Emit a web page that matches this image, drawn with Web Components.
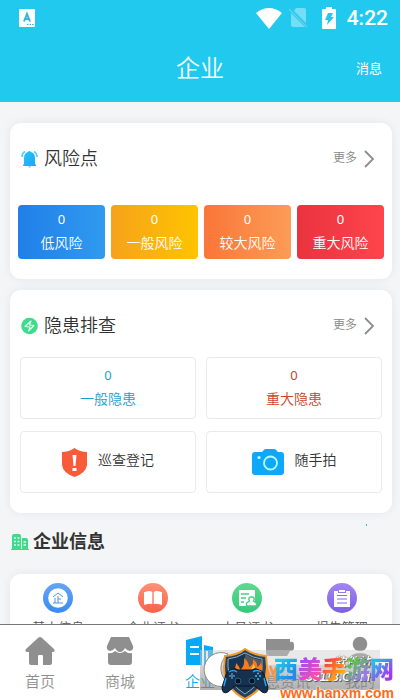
<!DOCTYPE html>
<html lang="zh-CN">
<head>
<meta charset="utf-8">
<meta name="viewport" content="width=device-width, initial-scale=1">
<title>企业</title>
<style>
  html, body { margin: 0; height: 100%; }
  body { font-family: Roboto, "Noto Sans CJK SC", sans-serif; font-weight: 350; color: #333; background: #f4f5f6; overflow: hidden; }
</style>
</head>
<body>
<enterprise-app></enterprise-app>

<script>
const define = (name, html) => {
  const t = document.createElement('template');
  t.innerHTML = `<style>*{box-sizing:border-box}button{font:inherit;color:inherit;background:none;border:0;padding:0;margin:0;cursor:pointer}svg{display:block;flex:none}</style>` + html;
  customElements.define(name, class extends HTMLElement {
    constructor() {
      super();
      this.attachShadow({ mode: 'open' }).append(t.content.cloneNode(true));
    }
  });
};

define('status-bar', `
<style>
  :host { display: flex; align-items: center; height: 36px; padding: 0 12px 0 19px; color: #fff; font: 500 21px/24px Roboto, sans-serif; }
  .right { display: flex; align-items: center; margin-left: auto; }
  .sim { margin-left: 7px; } .bat { margin-left: 14px; } time { margin-left: 11px; }
</style>
<svg width="16" height="18" viewBox="0 0 16 18"><rect width="16" height="18" rx="1" fill="#fff"/><path d="M5 12.500 8 5l3 7.500M6 10h4" fill="none" stroke="#35b5dd" stroke-width="2"/><path d="M8 15.500h7" stroke="#35b5dd" stroke-dasharray="1.500 1"/></svg>
<div class="right">
  <svg width="26" height="21" viewBox="0 0 26 21"><path d="M0 5Q13-5 26 5L13 21Z" fill="#fff"/></svg>
  <svg class="sim" width="19" height="20" viewBox="0 0 19 20"><path d="M7 0h8q2 0 2 2v13L5 3ZM2 5 16 19H4q-2 0-2-2Z" fill="#73def5"/><path d="m0 1 18 18" stroke="#68cde3" stroke-width="1.500"/></svg>
  <svg class="bat" width="14" height="22" viewBox="0 0 14 22"><path d="M4 0h6v2h3q1 0 1 1v18q0 1-1 1H1q-1 0-1-1V3q0-1 1-1h3Z" fill="#fff"/><path d="M6 6h5L9 10h3l-7 8 1-5H3Z" fill="#26c5ea"/></svg>
  <time>4:22</time>
</div>`);

define('page-header', `
<style>
  :host { display: block; background: #22c9ef; color: #fff; flex: none; }
  .bar { display: grid; grid-template-columns: 1fr auto 1fr; align-items: center; height: 66px; padding: 0 18px; }
  h1 { grid-column: 2; margin: 0; font-size: 24px; line-height: 36px; font-weight: 350; }
  button { justify-self: end; font-size: 13px; line-height: 20px; font-weight: 400; }
</style>
<status-bar></status-bar>
<div class="bar"><h1><slot name="title"></slot></h1><button type="button"><slot name="action"></slot></button></div>`);

define('content-card', `
<style>
  :host { display: block; background: #fff; border-radius: 11px; box-shadow: 0 0 8px rgba(200,214,226,.4); padding: 0 8px 20px; }
  header { display: flex; align-items: center; height: 72px; padding: 0 9px 0 3px; }
  h2 { margin: 0 auto 0 6px; font-size: 18px; line-height: 28px; font-weight: 350; }
  button { display: flex; align-items: center; gap: 7px; color: #888; font-size: 12px; line-height: 20px; }
  button span { padding-bottom: 2px; }
</style>
<header><slot name="icon"></slot><h2><slot name="title"></slot></h2>
<button type="button"><span>更多</span><svg width="11" height="18" viewBox="0 0 11 18"><path d="m1 1 8 8-8 8" fill="none" stroke="#8c8c8c" stroke-width="1.800"/></svg></button></header>
<slot></slot>`);

define('risk-tile', `
<style>
  :host { display: block; }
  button { display: grid; align-content: center; justify-items: center; width: 100%; height: 54px; padding-bottom: 2px; border-radius: 4px; color: #fff; background: linear-gradient(90deg, var(--from), var(--to)); font-size: 14px; line-height: 24px; }
  .n { font-family: "Noto Sans", sans-serif; font-size: 13px; font-weight: 400; }
</style>
<button type="button"><span class="n"><slot name="count"></slot></span><span><slot></slot></span></button>`);

define('count-box', `
<style>
  :host { display: block; }
  button { display: grid; align-content: center; justify-items: center; width: 100%; height: 62px; padding-bottom: 2px; border: 1px solid #e8eaed; border-radius: 4px; font-size: 14px; line-height: 24px; color: var(--tone); }
  .n { font-family: "Noto Sans", sans-serif; font-size: 13px; font-weight: 400; }
</style>
<button type="button"><span class="n"><slot name="count"></slot></span><span><slot></slot></span></button>`);

define('action-box', `
<style>
  :host { display: block; }
  button { display: flex; align-items: center; justify-content: center; gap: 11px; width: 100%; height: 62px; border: 1px solid #e8eaed; border-radius: 4px; font-size: 14px; line-height: 24px; }
  span { padding-bottom: 4px; }
</style>
<button type="button"><slot name="icon"></slot><span><slot></slot></span></button>`);

define('section-title', `
<style>
  :host { display: flex; align-items: center; gap: 4px; padding: 15px 25px 18px 1px; }
  h2 { margin: 0 auto 0 0; font-size: 18px; line-height: 28px; font-weight: 700; }
  .dot { align-self: flex-start; width: 1px; height: 2px; margin-top: -4px; background: #35b9c9; }
</style>
<slot name="icon"></slot><h2><slot></slot></h2><i class="dot"></i>`);

define('info-link', `
<style>
  :host { display: block; flex: 1; }
  button { display: grid; justify-items: center; gap: 5px; width: 100%; font-size: 13px; line-height: 20px; color: #555; white-space: nowrap; }
</style>
<button type="button"><slot name="icon"></slot><span><slot></slot></span></button>`);

define('tab-item', `
<style>
  :host { display: block; flex: 1 1 0; min-width: 0; color: #8f8f8f; }
  :host([active]) { color: #07a9f5; }
  a { display: grid; justify-items: center; gap: 5px; padding-top: 11px; color: inherit; text-decoration: none; font-size: 15px; line-height: 22px; white-space: nowrap; }
</style>
<a href="#"><slot name="icon"></slot><span><slot></slot></span></a>`);

define('site-watermark', `
<style>
  :host { display: block; position: absolute; right: 4px; bottom: 0; width: 196px; height: 52px; pointer-events: none; }
  .strip { position: absolute; left: 0; top: 2px; width: 180px; height: 40px; background: linear-gradient(rgba(205,205,205,.45) 0 36%, rgba(170,170,170,.5) 37%, rgba(125,125,125,.6)); }
  .under { position: absolute; right: 26px; top: 7px; display: grid; justify-items: end; color: #fff; font: italic 700 12px/15px "Liberation Sans", "Noto Sans CJK SC", sans-serif; text-shadow: 0 0 1px #222, 1px 1px 1px #555; }
  .art { position: absolute; left: 2px; top: 0; }
  .name { position: absolute; right: 2px; top: 4px; display: flex; font: 900 24px/32px "Noto Sans CJK SC", sans-serif; }
  .name span { background: linear-gradient(135deg, var(--a) 25%, var(--b) 75%); background-clip: text; -webkit-background-clip: text; color: transparent; }
  .url { position: absolute; right: 2px; bottom: -1px; color: #ff6b16; font: 700 14px/16px "Liberation Sans", sans-serif; text-shadow: 0 0 2px #fff, 0 0 2px #fff; }
</style>
<div class="strip"></div>
<div class="under"><span>软件站</span><span>C9113.COM</span></div>
<svg class="art" width="78" height="52" viewBox="0 0 78 52">
  <path d="M26 6A17 17 0 1 0 28 36 18 18 0 0 1 26 6Z" fill="#fff" stroke="#8b8b8b"/>
  <path d="M68 18l3 8 4-8M64 18l3 9-4 5M77 18l-5 15" fill="none" stroke="#f79349" stroke-width="2.500"/>
  <path d="M43 1Q51 7 64 8L65 19Q65 40 43 51 22 40 22 19L23 8Q36 7 43 1Z" fill="#25415f" stroke="#f29a2d" stroke-width="2"/>
  <path d="M43 5q8 5 17 6v8q-1 18-17 27Q27 37 26 19v-8q9-1 17-6Z" fill="#153451" stroke="#93a9b8"/>
  <path d="M43 6q8 5 16 6v9H43Z" fill="#57585e"/>
  <path d="M30 22q4-1 4-7 4 4 4 7 5-3 4-12 5 4 5 9 5-2 4-8 5 4 4 8 3-1 4-5 3 8 0 14l-8 6H38l-8-6Z" fill="#ff7917"/><path d="M46 24q5-3 5-8 4 5 1 9l5-4-4 11h-7Z" fill="#ffd24a"/>
  <path d="M29 22q4-3 7 0h14q3-3 7 0 5 1 6 8l3 9q0 8-6 5l-7-6H33l-7 6q-6 3-6-5l3-9q1-7 6-8Z" fill="#16304e" stroke="#081426"/>
  <path d="M27 24q4-3 8 0M51 24q4-3 8 0M22 38l2-8M64 38l-2-8" fill="none" stroke="#1da9f3" stroke-width="1.500"/>
  <path d="M30 25v6M27 28h6" stroke="#397aa7" stroke-width="2"/><circle cx="36" cy="33" r="3" fill="#08111f" stroke="#226593"/><circle cx="50" cy="33" r="3" fill="#08111f" stroke="#226593"/><path d="M54 28h.1M58 28h.1M56 25.500h.1M56 31h.1" stroke="#30b9fa" stroke-width="2" stroke-linecap="round"/>
</svg>
<div class="name"><span style="--a:#20c9ed;--b:#2489e8">西</span><span style="--a:#a54cf1;--b:#f54fb1">美</span><span style="--a:#ff3d44;--b:#ffad0d">手</span><span style="--a:#51cf32;--b:#9b78ed">游</span><span style="--a:#25bdf2;--b:#a537f0">网</span></div>
<div class="url">www.hanxm.com</div>`);

define('enterprise-app', `
<style>
  :host { position: relative; display: flex; flex-direction: column; height: 100vh; overflow: hidden; }
  main { flex: 1; min-height: 0; overflow: hidden; padding: 21px 8px 0 10px; }
  .tiles { display: grid; grid-template-columns: repeat(4, 1fr); gap: 6px; padding-top: 10px; }
  .second { margin-top: 11px; }
  .boxes { display: grid; grid-template-columns: 1fr 1fr; gap: 12px 10px; margin: -5px 2px 0; }
  .info { display: flex; padding: 9px 3px 20px 1px; background: #fff; border-radius: 11px; box-shadow: 0 0 8px rgba(200,214,226,.4); }
  nav { display: flex; flex: none; height: 76px; background: #fff; border-top: 1px solid #777; }
</style>
<page-header><span slot="title">企业</span><span slot="action">消息</span></page-header>
<main>
  <content-card>
    <svg slot="icon" width="17" height="18" viewBox="0 0 17 18"><defs><linearGradient id="b" x2="1" y2="1"><stop stop-color="#23c8f5"/><stop offset="1" stop-color="#1fa2f8"/></linearGradient></defs><path d="M3 14V8q0-5 4-6 1.500-2 3 0 4 1 4 6v6l1 1v1H2v-1ZM7 16.500h3q-1.500 2-3 0Z" fill="url(#b)"/><path d="M1 7q0-4 3-5.500M16 7q0-4-3-5.500" fill="none" stroke="#5ccdf7" stroke-width="1.600"/></svg>
    <span slot="title">风险点</span>
    <div class="tiles">
      <risk-tile style="--from:#207fe8;--to:#309af0"><span slot="count">0</span>低风险</risk-tile>
      <risk-tile style="--from:#f6a21b;--to:#ffc400"><span slot="count">0</span>一般风险</risk-tile>
      <risk-tile style="--from:#fa7638;--to:#fc9c57"><span slot="count">0</span>较大风险</risk-tile>
      <risk-tile style="--from:#e9333f;--to:#ff444c"><span slot="count">0</span>重大风险</risk-tile>
    </div>
  </content-card>
  <content-card class="second">
    <svg slot="icon" width="17" height="18" viewBox="0 0 17 18"><circle cx="8.500" cy="9" r="8.300" fill="#3edb8c"/><path d="M10 4 4 9.500l5 .5-1.500 4L13 8.500 8.500 8Z" fill="none" stroke="#dffff0" stroke-width="1.200" stroke-linejoin="round"/></svg>
    <span slot="title">隐患排查</span>
    <div class="boxes">
      <count-box style="--tone:#1a9fd2"><span slot="count">0</span>一般隐患</count-box>
      <count-box style="--tone:#c9452d"><span slot="count">0</span>重大隐患</count-box>
      <action-box><svg slot="icon" width="25" height="29" viewBox="0 0 25 29"><path d="M12.500 0Q18 4 25 4v13q-1 8-12.500 12Q1 25 0 17V4q7 0 12.500-4Z" fill="#f95b38"/><path d="M10.500 7h4l-1 11h-2ZM10.500 20h4v3h-4Z" fill="#fff"/></svg>巡查登记</action-box>
      <action-box><svg slot="icon" width="32" height="26" viewBox="0 0 32 26"><path d="M11 2q1-2 3-2h8q2 0 3 2l1 1h3q3 0 3 3v17q0 3-3 3H3q-3 0-3-3V6q0-3 3-3h7Z" fill="#0ea8fb"/><circle cx="18.500" cy="14" r="6.500" fill="none" stroke="#b8fcff" stroke-width="1.800"/><circle cx="7" cy="8.500" r="1.600" fill="#d2ffff"/></svg>随手拍</action-box>
    </div>
  </content-card>
  <section-title><svg slot="icon" width="18" height="16" viewBox="0 0 18 16"><path d="M1 15V2q0-2 2-2h5q2 0 2 2v13h1V4h4q2 0 2 2v9h1v1H0v-1Z" fill="#3edb8c"/><path d="M3 4h2M6.500 4h2M3 7.500h2M6.500 7.500h2M3 11h2M6.500 11h2M12.500 8h2.500M12.500 11h2.500" stroke="#d8ffe9" stroke-width="1.300"/></svg>企业信息</section-title>
  <div class="info">
    <info-link><svg slot="icon" width="30" height="30" viewBox="0 0 30 30"><defs><linearGradient id="i1" x2="0" y2="1"><stop stop-color="#66a5f5"/><stop offset="1" stop-color="#378af4"/></linearGradient></defs><circle cx="15" cy="15" r="15" fill="url(#i1)"/><circle cx="15" cy="15" r="9.800" fill="#fff"/><path d="M10 14 15 10l5 4M15 13v7M12 15v5M15 16h3M10 20h10" fill="none" stroke="#4797e9"/></svg>基本信息</info-link>
    <info-link><svg slot="icon" width="30" height="30" viewBox="0 0 30 30"><defs><linearGradient id="i2" x2="0" y2="1"><stop stop-color="#ff9278"/><stop offset="1" stop-color="#fa6148"/></linearGradient></defs><circle cx="15" cy="15" r="15" fill="url(#i2)"/><path d="M6 9h1q5-2 7.300 0v12Q12 20 6 22ZM24 9h-1q-5-2-7.300 0v12q2.300-1 8.300 1Z" fill="#fff"/></svg>企业证书</info-link>
    <info-link><svg slot="icon" width="30" height="30" viewBox="0 0 30 30"><defs><linearGradient id="i3" x2="0" y2="1"><stop stop-color="#5cdb91"/><stop offset="1" stop-color="#35c87a"/></linearGradient></defs><circle cx="15" cy="15" r="15" fill="url(#i3)"/><rect x="7" y="7" width="16" height="16" rx="1" fill="#fff"/><path d="M9 11h8M9 15h5M9 19h3" stroke="#45ce85" stroke-width="1.300"/><path d="M17.500 18q-2-4 2-4t2 4l3 2v3H14.500v-3Z" fill="#fff" stroke="#45ce85" stroke-width="1.400"/></svg>人员证书</info-link>
    <info-link><svg slot="icon" width="30" height="30" viewBox="0 0 30 30"><defs><linearGradient id="i4" x2="0" y2="1"><stop stop-color="#a585f3"/><stop offset="1" stop-color="#7c60e3"/></linearGradient></defs><circle cx="15" cy="15" r="15" fill="url(#i4)"/><path d="M7 8h4v2h8V8h4v16H7ZM12 7h6v2h-6Z" fill="#fff"/><path d="M10 12.500h10M10 16h10M10 20h10" stroke="#8869e7" stroke-width="1.200"/></svg>报告管理</info-link>
  </div>
</main>
<nav aria-label="主导航">
  <tab-item><svg slot="icon" width="30" height="30" viewBox="0 0 30 30"><path d="M13 2q2-2 4 0l12 11q2 3-2 3v11q0 2-2 2h-7V20q0-1-1-1h-3q-1 0-1 1v9H6q-2 0-2-2V16H3q-4 0-2-3Z" fill="#8f8f8f"/></svg>首页</tab-item>
  <tab-item><svg slot="icon" width="30" height="30" viewBox="0 0 30 30"><path d="M6 1h18l4 9q1 4-3 5-3 0-5-3-2 4-5 4t-5-4q-2 3-5 3-4-1-3-5ZM3 17q4 1 7-2 5 4 10 0 3 3 7 2v9q0 3-3 3H6q-3 0-3-3Z" fill="#8f8f8f"/></svg>商城</tab-item>
  <tab-item active><svg slot="icon" width="30" height="30" viewBox="0 0 30 30"><path d="M1 4 17 0v29H1ZM19 9l9 2v18H19Z" fill="#07a9f5"/><path d="M5 11h9M5 18h9M22 15v11" stroke="#fff" stroke-width="2"/></svg>企业</tab-item>
  <tab-item><svg slot="icon" width="30" height="30" viewBox="0 0 30 30"><path d="M1 3h24v3q4-1 4 3v3q0 3-4 3l-3 5H4q-3 0-3-4Z" fill="#8f8f8f"/></svg>信息资讯</tab-item>
  <tab-item><svg slot="icon" width="30" height="30" viewBox="0 0 30 30"><circle cx="15" cy="8" r="7.300" fill="#8f8f8f"/><path d="M3 29q0-12 12-12t12 12Z" fill="#8f8f8f"/></svg>我的</tab-item>
</nav>
<site-watermark></site-watermark>`);
</script>
</body>
</html>
